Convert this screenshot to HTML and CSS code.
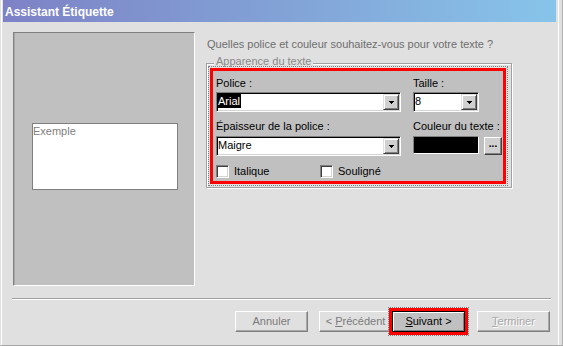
FILE: index.html
```html
<!DOCTYPE html>
<html lang="fr">
<head>
<meta charset="utf-8">
<title>Assistant Étiquette</title>
<link rel="stylesheet" href="styles.css">
</head>
<body>
<div class="window">
  <div class="title">Assistant Étiquette</div>
  <div class="client">
    <div class="top">
      <div class="preview">
        <div class="sample">Exemple</div>
      </div>
      <div class="right">
        <p class="question">Quelles police et couleur souhaitez-vous pour votre texte ?</p>
        <div class="group">
          <span class="legend">Apparence du texte</span>
          <div class="focus">
            <div class="hl">
              <div class="fields">
                <div class="lbl">Police :</div>
                <div class="lbl">Taille :</div>
                <div class="combo combo-wide row2">
                  <span class="val"><span class="sel">Arial</span></span>
                  <span class="drop"><svg width="5" height="3" viewBox="0 0 5 3" shape-rendering="crispEdges"><path d="M0 0h5v1h-1v1h-1v1h-1v-1h-1v-1h-1z" fill="#000"/></svg></span>
                </div>
                <div class="combo combo-small row2">
                  <span class="val">8</span>
                  <span class="drop"><svg width="5" height="3" viewBox="0 0 5 3" shape-rendering="crispEdges"><path d="M0 0h5v1h-1v1h-1v1h-1v-1h-1v-1h-1z" fill="#000"/></svg></span>
                </div>
                <div class="lbl row3">Épaisseur de la police :</div>
                <div class="lbl row3">Couleur du texte :</div>
                <div class="combo combo-wide row4">
                  <span class="val">Maigre</span>
                  <span class="drop"><svg width="5" height="3" viewBox="0 0 5 3" shape-rendering="crispEdges"><path d="M0 0h5v1h-1v1h-1v1h-1v-1h-1v-1h-1z" fill="#000"/></svg></span>
                </div>
                <div class="colorrow row4">
                  <span class="swatch"></span>
                  <span class="dots">...</span>
                </div>
              </div>
              <div class="checks">
                <div class="check check-first"><span class="box"></span><span>Italique</span></div>
                <div class="check"><span class="box"></span><span>Souligné</span></div>
              </div>
            </div>
          </div>
        </div>
      </div>
    </div>
    <div class="sep"></div>
    <div class="buttons">
      <div class="btn">Annuler</div>
      <div class="btn btn-gap">&lt; <u>P</u>récédent</div>
      <div class="btn next"><u>S</u>uivant &gt;</div>
      <div class="btn btn-gap2 disabled"><u>T</u>erminer</div>
    </div>
  </div>
</div>
</body>
</html>
```

FILE: styles.css
```css
* { box-sizing: border-box; }

body {
  margin: 0;
  background: #e0e0e0;
  font-family: "Liberation Sans", Arial, sans-serif;
  font-size: 11px;
  line-height: 13px;
  color: #000;
}

.window {
  width: 563px;
  height: 346px;
  border-left: 1px solid #e0e0e0;
  border-right: 1px solid #b0b0b0;
  border-bottom: 1px solid #a8a8a8;
  box-shadow: inset 1px 0 #fff, inset -3px 0 #e0e0e0, inset -4px 0 #fff;
  padding: 0 6px 0 2px;
}

.title {
  height: 22px;
  padding: 2px 0 0 2px;
  background: linear-gradient(to right, #7d82c6, #82a2d6 50%, #87c4ea);
  color: #fff;
  font-weight: bold;
  font-size: 12px;
  line-height: 20px;
}

.client {
  padding: 10px 0 0 10px;
}

.top {
  display: flex;
  gap: 11px;
}

.preview {
  width: 182px;
  height: 254px;
  background: #c0c0c0;
  border: 1px solid;
  border-color: #808080 #fff #fff #808080;
  box-shadow: inset 1px 0 #a8a8a8;
  padding: 90px 0 0 18px;
}

.sample {
  width: 146px;
  height: 67px;
  border: 1px solid #808080;
  background: #fff;
  color: #808080;
  padding: 1px 0 0 0;
}

.question {
  margin: 6px 0 0 1px;
  color: #6e6e6e;
}

.group {
  position: relative;
  margin-top: 12px;
  width: 306px;
  height: 125px;
  border: 1px solid #a0a0a0;
  box-shadow: inset 1px 1px #fff, 1px 1px #fff;
  padding: 2px 3px 1px 1px;
}

.legend {
  position: absolute;
  left: 7px;
  top: -9px;
  padding: 0 2px;
  background: #e0e0e0;
  color: #8a8a8a;
}

.focus {
  position: relative;
  z-index: 1;
  height: 120px;
  border: 1px dotted #808080;
  padding: 1px;
}

.hl {
  height: 116px;
  border: 3px solid #ff0000;
  background: #c0c0c0;
  padding: 6px 0 0 3px;
}

.fields {
  display: grid;
  grid-template-columns: 185px 89px;
  column-gap: 12px;
}

.lbl { height: 13px; white-space: nowrap; }
.row2 { margin-top: 2px; }
.row3 { margin-top: 8px; }
.row4 { margin-top: 3px; }

.combo {
  display: flex;
  height: 20px;
  border: 1px solid;
  border-color: #808080 #fff #fff #808080;
  box-shadow: inset 1px 1px #000, inset -1px -1px #d4d4d4;
  padding: 1px;
  background: #fff;
}

.combo-wide { width: 185px; }
.combo-small { width: 66px; }

.val {
  flex: 1;
  line-height: 14px;
  height: 14px;
}

.sel {
  display: inline-block;
  background: #000;
  color: #fff;
  padding-right: 1px;
}

.drop {
  width: 16px;
  height: 16px;
  display: flex;
  align-items: center;
  justify-content: center;
  background: #d0d0d0;
  border: 1px solid;
  border-color: #e0e0e0 #404040 #404040 #e0e0e0;
  box-shadow: inset 1px 1px #fff, inset -1px -1px #808080;
  padding-top: 1px;
}

.colorrow {
  display: flex;
  align-items: flex-start;
  gap: 5px;
}

.swatch {
  width: 66px;
  height: 18px;
  background: #000;
  border: 1px solid;
  border-color: #808080 #fff #fff #808080;
}

.dots {
  width: 18px;
  height: 18px;
  margin-top: 1px;
  background: #d0d0d0;
  border: 1px solid;
  border-color: #fff #404040 #404040 #fff;
  box-shadow: inset -1px -1px #808080;
  font-weight: bold;
  font-size: 10px;
  line-height: 12px;
  text-align: center;
}

.checks {
  display: flex;
  margin-top: 9px;
}

.check {
  display: flex;
  align-items: center;
  gap: 5px;
  height: 13px;
}

.check-first { width: 104px; }

.box {
  width: 13px;
  height: 13px;
  background: #fff;
  border: 1px solid;
  border-color: #808080 #fff #fff #808080;
  box-shadow: inset 1px 1px #404040, inset -1px -1px #d4d4d4;
}

.sep {
  margin: 12px 0 0 -1px;
  width: 539px;
  height: 2px;
  border-top: 1px solid #a0a0a0;
  border-bottom: 1px solid #fff;
}

.buttons {
  display: flex;
  margin-top: 11px;
  padding-left: 222px;
}

.btn {
  width: 73px;
  height: 21px;
  border: 1px solid;
  border-color: #fff #808080 #808080 #fff;
  box-shadow: inset -1px -1px #a8a8a8;
  background: #e0e0e0;
  color: #7b7b7b;
  text-align: center;
  line-height: 19px;
}

.btn-gap { margin-left: 11px; }
.btn-gap2 { margin-left: 12px; }

.disabled {
  color: #a8a8a8;
  text-shadow: 1px 1px #fff;
}

.next {
  position: relative;
  background: #c0c0c0;
  color: #000;
  border-color: #000;
  box-shadow: inset 1px 1px #fff, inset -1px -1px #808080;
}

.next::before {
  content: "";
  position: absolute;
  inset: -5px;
  border: 1px dotted #808080;
}

.next::after {
  content: "";
  position: absolute;
  inset: -4px;
  border: 3px solid #ff0000;
}
```
